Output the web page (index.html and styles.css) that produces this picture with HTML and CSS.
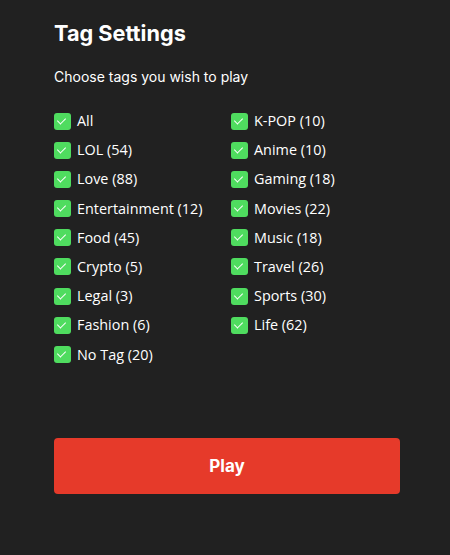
FILE: index.html
```html
<!DOCTYPE html>
<html lang="en">
<head>
  <meta charset="UTF-8">
  <title>Tag Settings</title>
  <link rel="stylesheet" href="styles.css">
</head>
<body>
  <div class="panel">
    <h1>Tag Settings</h1>
    <p class="hint">Choose tags you wish to play</p>

    <div class="tags">
      <label class="tag"><span class="box"></span>All</label>
      <label class="tag"><span class="box"></span>K-POP (10)</label>
      <label class="tag"><span class="box"></span>LOL (54)</label>
      <label class="tag"><span class="box"></span>Anime (10)</label>
      <label class="tag"><span class="box"></span>Love (88)</label>
      <label class="tag"><span class="box"></span>Gaming (18)</label>
      <label class="tag"><span class="box"></span>Entertainment (12)</label>
      <label class="tag"><span class="box"></span>Movies (22)</label>
      <label class="tag"><span class="box"></span>Food (45)</label>
      <label class="tag"><span class="box"></span>Music (18)</label>
      <label class="tag"><span class="box"></span>Crypto (5)</label>
      <label class="tag"><span class="box"></span>Travel (26)</label>
      <label class="tag"><span class="box"></span>Legal (3)</label>
      <label class="tag"><span class="box"></span>Sports (30)</label>
      <label class="tag"><span class="box"></span>Fashion (6)</label>
      <label class="tag"><span class="box"></span>Life (62)</label>
      <label class="tag"><span class="box"></span>No Tag (20)</label>
    </div>

    <button type="button" class="play">Play</button>
  </div>
</body>
</html>
```

FILE: styles.css
```css
body { margin: 0; background: #212121; color: #fff; font-family: "Open Sans", "Noto Sans", sans-serif; }
.panel { width: 346px; padding: 18px 0 0 54px; }
h1 { margin: 0; font-family: Inter, sans-serif; font-size: 21.7px; font-weight: 700; line-height: 30px; }
.hint { margin: 19px 0 25px; font-family: Inter, sans-serif; font-size: 14px; line-height: 20px; }
.tags { display: grid; grid-template-columns: 177px 1fr; row-gap: 11.2px; }
.tag { display: flex; align-items: center; gap: 6px; font-size: 14.4px; font-weight: 500; line-height: 18px; }
.box { width: 17px; height: 17px; border-radius: 3px; background: #4fdc5f; position: relative; flex: none; }
.box::after { content: ""; position: absolute; left: 5px; top: 3px; width: 4px; height: 7px; border: solid #fff; border-width: 0 1.5px 1.5px 0; transform: rotate(45deg); }
.play { display: block; width: 346px; height: 56px; margin-top: 74px; border: none; border-radius: 4px; background: #e63a2a; color: #fff; font-family: Inter, sans-serif; font-size: 17px; font-weight: 700; cursor: pointer; }
```
